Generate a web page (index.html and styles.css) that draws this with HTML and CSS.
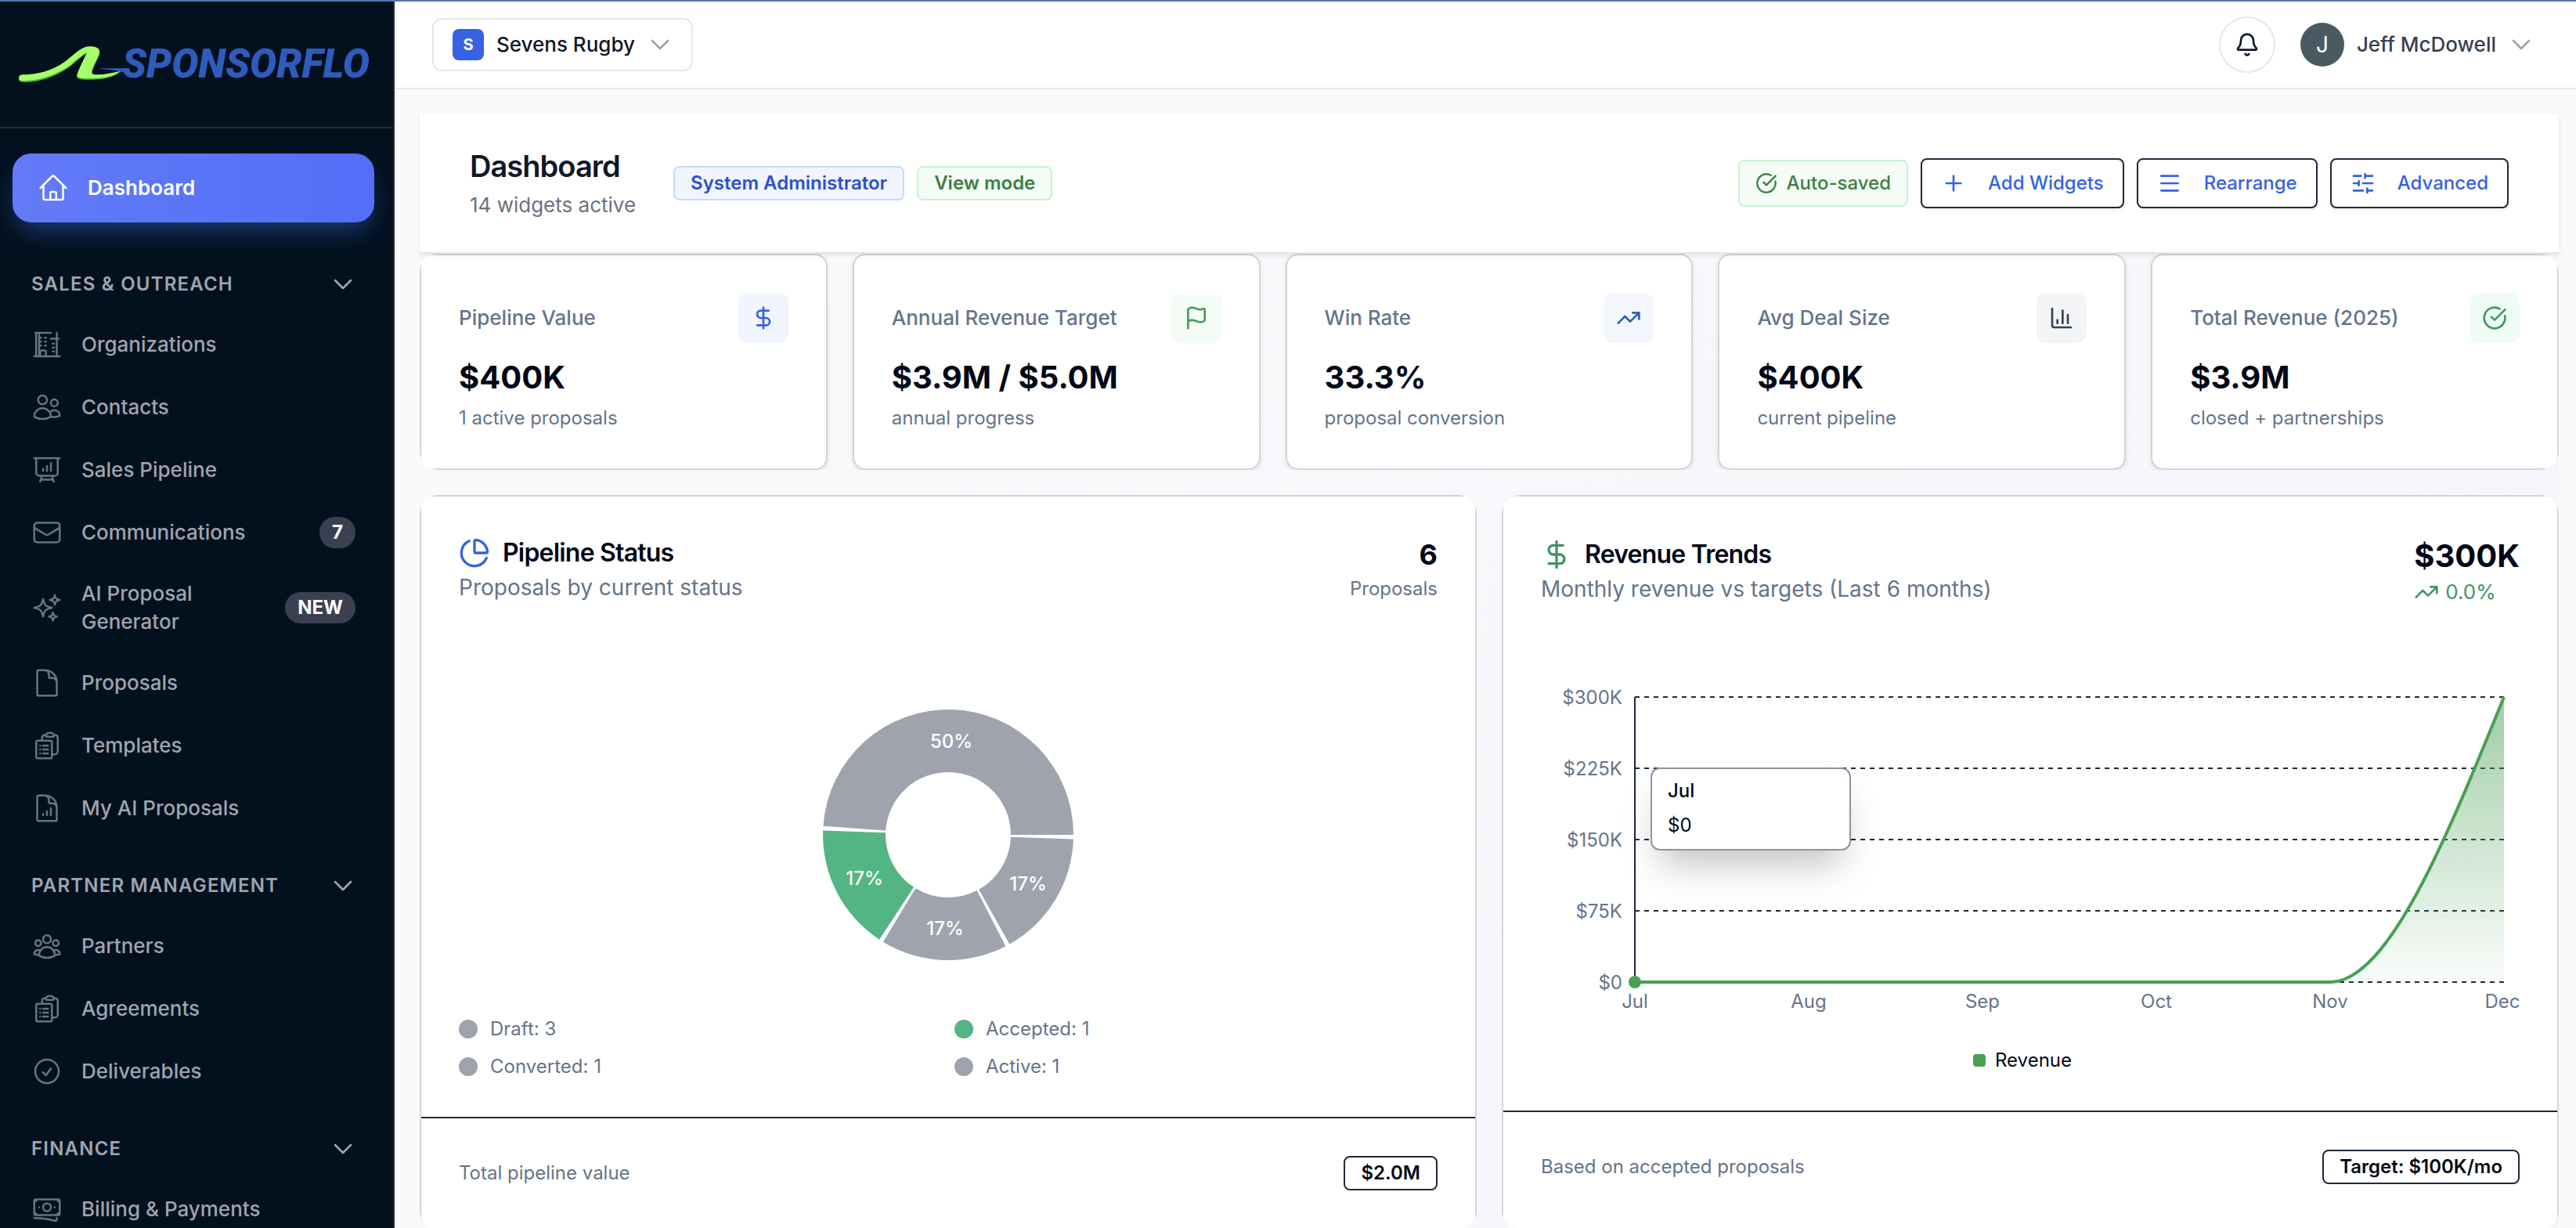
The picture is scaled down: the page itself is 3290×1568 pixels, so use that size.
FILE: index.html
```html
<!DOCTYPE html>
<html lang="en">
<head>
<meta charset="utf-8">
<meta name="viewport" content="width=device-width, initial-scale=1">
<title>Dashboard – SponsorFlo</title>
<link rel="stylesheet" href="styles.css">
</head>
<body>
<svg class="defs" aria-hidden="true">
  <symbol id="i-chevron" viewBox="0 0 24 24"><path d="m19.5 8.25-7.5 7.5-7.5-7.5"/></symbol>
  <symbol id="i-home" viewBox="0 0 24 24"><path d="m2.25 12 8.954-8.955c.44-.439 1.152-.439 1.591 0L21.75 12M4.5 9.75v10.125c0 .621.504 1.125 1.125 1.125H9.75v-4.875c0-.621.504-1.125 1.125-1.125h2.25c.621 0 1.125.504 1.125 1.125V21h4.125c.621 0 1.125-.504 1.125-1.125V9.75M8.25 21h8.25"/></symbol>
  <symbol id="i-building" viewBox="0 0 24 24"><path d="M2.25 21h19.5m-18-18v18m2.25-18v18m13.5-18v18M6.75 6.75h.75m-.75 3h.75m-.75 3h.75m3-6h.75m-.75 3h.75m-.75 3h.75M6.75 21v-3.375c0-.621.504-1.125 1.125-1.125h2.25c.621 0 1.125.504 1.125 1.125V21M3 3h12m4.5 4.5h-4.500M21 7.500h-1.500M16.500 11.250h.750m-.750 3h.750m-.750 3h.750"/></symbol>
  <symbol id="i-users" viewBox="0 0 24 24"><path d="M15 19.128a9.380 9.380 0 0 0 2.625.372 9.337 9.337 0 0 0 4.121-.952 4.125 4.125 0 0 0-7.533-2.493M15 19.128v-.003c0-1.113-.285-2.160-.786-3.070M15 19.128v.106A12.318 12.318 0 0 1 8.624 21c-2.331 0-4.512-.645-6.374-1.766l-.001-.109a6.375 6.375 0 0 1 11.964-3.070M12 6.375a3.375 3.375 0 1 1-6.750 0 3.375 3.375 0 0 1 6.750 0Zm8.250 2.250a2.625 2.625 0 1 1-5.250 0 2.625 2.625 0 0 1 5.250 0Z"/></symbol>
  <symbol id="i-presentation" viewBox="0 0 24 24"><path d="M3.750 3v11.250A2.250 2.250 0 0 0 6 16.500h2.250M3.750 3h-1.500m1.500 0h16.500m0 0h1.500m-1.500 0v11.250A2.250 2.250 0 0 1 18 16.500h-2.250m-7.500 0h7.500m-7.500 0-1 3m8.500-3 1 3m0 0 .500 1.500m-.500-1.500h-9.500m0 0-.500 1.500M9 11.250v1.500M12 9v3.750m3-6v6"/></symbol>
  <symbol id="i-mail" viewBox="0 0 24 24"><path d="M21.750 6.750v10.500a2.250 2.250 0 0 1-2.250 2.250h-15a2.250 2.250 0 0 1-2.250-2.250V6.750m19.500 0A2.250 2.250 0 0 0 19.500 4.500h-15a2.250 2.250 0 0 0-2.250 2.250m19.500 0v.243a2.250 2.250 0 0 1-1.070 1.916l-7.500 4.615a2.250 2.250 0 0 1-2.360 0L3.320 8.910a2.250 2.250 0 0 1-1.070-1.916V6.750"/></symbol>
  <symbol id="i-sparkles" viewBox="0 0 24 24"><path d="M9.813 15.904 9 18.750l-.813-2.846a4.500 4.500 0 0 0-3.090-3.090L2.250 12l2.846-.813a4.500 4.500 0 0 0 3.090-3.090L9 5.250l.813 2.846a4.500 4.500 0 0 0 3.090 3.090L15.750 12l-2.846.813a4.500 4.500 0 0 0-3.090 3.090ZM18.259 8.715 18 9.750l-.259-1.035a3.375 3.375 0 0 0-2.455-2.456L14.250 6l1.036-.259a3.375 3.375 0 0 0 2.455-2.456L18 2.250l.259 1.035a3.375 3.375 0 0 0 2.456 2.456L21.750 6l-1.035.259a3.375 3.375 0 0 0-2.456 2.456ZM16.894 20.567 16.500 21.750l-.394-1.183a2.250 2.250 0 0 0-1.423-1.423L13.500 18.750l1.183-.394a2.250 2.250 0 0 0 1.423-1.423l.394-1.183.394 1.183a2.250 2.250 0 0 0 1.423 1.423l1.183.394-1.183.394a2.250 2.250 0 0 0-1.423 1.423Z"/></symbol>
  <symbol id="i-document" viewBox="0 0 24 24"><path d="M19.500 14.250v-2.625a3.375 3.375 0 0 0-3.375-3.375h-1.500A1.125 1.125 0 0 1 13.500 7.125v-1.500a3.375 3.375 0 0 0-3.375-3.375H8.250m2.250 0H5.625c-.621 0-1.125.504-1.125 1.125v17.250c0 .621.504 1.125 1.125 1.125h12.750c.621 0 1.125-.504 1.125-1.125V11.250a9 9 0 0 0-9-9Z"/></symbol>
  <symbol id="i-doc-chart" viewBox="0 0 24 24"><path d="M19.500 14.250v-2.625a3.375 3.375 0 0 0-3.375-3.375h-1.500A1.125 1.125 0 0 1 13.500 7.125v-1.500a3.375 3.375 0 0 0-3.375-3.375H8.250M9 16.500v.750m3-3v3M15 12v5.250m-4.500-15H5.625c-.621 0-1.125.504-1.125 1.125v17.250c0 .621.504 1.125 1.125 1.125h12.750c.621 0 1.125-.504 1.125-1.125V11.250a9 9 0 0 0-9-9Z"/></symbol>
  <symbol id="i-clipboard" viewBox="0 0 24 24"><path d="M9 12h3.750M9 15h3.750M9 18h3.750m3 .750H18a2.250 2.250 0 0 0 2.250-2.250V6.108c0-1.135-.845-2.098-1.976-2.192a48.424 48.424 0 0 0-1.123-.080m-5.801 0c-.065.210-.100.433-.100.664 0 .414.336.750.750.750h4.500a.750.750 0 0 0 .750-.750 2.250 2.250 0 0 0-.100-.664m-5.800 0A2.251 2.251 0 0 1 13.500 2.250H15c1.012 0 1.867.668 2.150 1.586m-5.800 0c-.376.023-.750.050-1.124.080C9.095 4.010 8.250 4.973 8.250 6.108V8.250m0 0H4.875c-.621 0-1.125.504-1.125 1.125v11.250c0 .621.504 1.125 1.125 1.125h9.750c.621 0 1.125-.504 1.125-1.125V9.375c0-.621-.504-1.125-1.125-1.125H8.250ZM6.750 12h.008v.008H6.750V12Zm0 3h.008v.008H6.750V15Zm0 3h.008v.008H6.750V18Z"/></symbol>
  <symbol id="i-group" viewBox="0 0 24 24"><path d="M18 18.720a9.094 9.094 0 0 0 3.741-.479 3 3 0 0 0-4.682-2.720m.940 3.198.001.031c0 .225-.012.447-.037.666A11.944 11.944 0 0 1 12 21c-2.170 0-4.207-.576-5.963-1.584A6.062 6.062 0 0 1 6 18.719m12 0a5.971 5.971 0 0 0-.941-3.197m0 0A5.995 5.995 0 0 0 12 12.750a5.995 5.995 0 0 0-5.058 2.772m0 0a3 3 0 0 0-4.681 2.720 8.986 8.986 0 0 0 3.740.477m.940-3.197a5.971 5.971 0 0 0-.940 3.197M15 6.750a3 3 0 1 1-6 0 3 3 0 0 1 6 0Zm6 3a2.250 2.250 0 1 1-4.500 0 2.250 2.250 0 0 1 4.500 0Zm-13.500 0a2.250 2.250 0 1 1-4.500 0 2.250 2.250 0 0 1 4.500 0Z"/></symbol>
  <symbol id="i-check" viewBox="0 0 24 24"><path d="M9 12.750 11.250 15 15 9.750M21 12a9 9 0 1 1-18 0 9 9 0 0 1 18 0Z"/></symbol>
  <symbol id="i-cash" viewBox="0 0 24 24"><path d="M2.250 18.750a60.070 60.070 0 0 1 15.797 2.101c.727.198 1.453-.342 1.453-1.096V18.750M3.750 4.500v.750A.750.750 0 0 1 3 6h-.750m0 0v-.375c0-.621.504-1.125 1.125-1.125H20.250M2.250 6v9m18-10.500v.750c0 .414.336.750.750.750h.750m-1.500-1.500h.375c.621 0 1.125.504 1.125 1.125v9.750c0 .621-.504 1.125-1.125 1.125h-.375m1.500-1.500H21a.750.750 0 0 0-.750.750v.750m0 0H3.750m0 0h-.375a1.125 1.125 0 0 1-1.125-1.125V15m1.500 1.500v-.750A.750.750 0 0 0 3 15h-.750M15 10.500a3 3 0 1 1-6 0 3 3 0 0 1 6 0Zm3 0h.008v.008H18V10.500Zm-12 0h.008v.008H6V10.500Z"/></symbol>
  <symbol id="i-bell" viewBox="0 0 24 24"><path d="M10.268 21a2 2 0 0 0 3.464 0M3.262 15.326A1 1 0 0 0 4 17h16a1 1 0 0 0 .740-1.673C19.410 13.956 18 12.499 18 8A6 6 0 0 0 6 8c0 4.499-1.411 5.956-2.738 7.326"/></symbol>
  <symbol id="i-done" viewBox="0 0 24 24"><path d="M21.801 10A10 10 0 1 1 17 3.335M9 11l3 3L22 4"/></symbol>
  <symbol id="i-plus" viewBox="0 0 24 24"><path d="M5 12h14M12 5v14"/></symbol>
  <symbol id="i-menu" viewBox="0 0 24 24"><path d="M4 5h16M4 12h16M4 19h16"/></symbol>
  <symbol id="i-sliders" viewBox="0 0 24 24"><path d="M10 5H3M12 19H3M14 3v4M16 17v4M21 12h-9M21 19h-5M21 5h-7M8 10v4M8 12H3"/></symbol>
  <symbol id="i-dollar" viewBox="0 0 24 24"><path d="M12 2v20M17 5H9.500a3.500 3.500 0 0 0 0 7h5a3.500 3.500 0 0 1 0 7H6"/></symbol>
  <symbol id="i-flag" viewBox="0 0 24 24"><path d="M4 22V4a1 1 0 0 1 .400-.800A6 6 0 0 1 8 2c3 0 5 2 7.333 2q2 0 3.067-.800A1 1 0 0 1 20 4v10a1 1 0 0 1-.400.800A6 6 0 0 1 16 16c-3 0-5-2-8-2a6 6 0 0 0-4 1.528"/></symbol>
  <symbol id="i-trend" viewBox="0 0 24 24"><path d="M16 7h6v6M22 7l-8.500 8.500-5-5L2 17"/></symbol>
  <symbol id="i-bars" viewBox="0 0 24 24"><path d="M3 3v16a2 2 0 0 0 2 2h16M18 17V9M13 17V5M8 17v-3"/></symbol>
  <symbol id="i-pie" viewBox="0 0 24 24"><path d="M21 12c.552 0 1.005-.449.950-.998a10 10 0 0 0-8.953-8.951c-.550-.055-.998.398-.998.950v8a1 1 0 0 0 1 1zM21.210 15.890A10 10 0 1 1 8 2.830"/></symbol>
</svg>

<div class="app">
  <aside class="sidebar">
    <a class="brand" href="#" aria-label="SponsorFlo home">
      <svg class="brand-logo" viewBox="0 0 460 48" role="img" aria-label="SponsorFlo">
        <svg x="0" y="0" width="146" height="48" viewBox="72 174 438 144">
          <path fill="#4fb83a" d="M72 303C72 294 78 290 88 290C150 290 196 272 234 250C268 228 296 196 322 186C336 180 362 181 372 187C382 193 385 204 380 214C370 236 356 262 353 276C351 286 356 290 372 290C404 290 434 282 462 276C434 296 400 304 352 305C310 306 292 302 294 290C297 274 322 230 333 204C304 220 276 252 250 268C204 296 150 314 100 315C80 315 72 312 72 303Z"/>
          <path fill="#a4ff68" d="M72 299C72 290 78 286 88 286C150 286 196 268 234 246C268 224 296 192 322 182C336 176 362 177 372 183C382 189 383 200 378 210C368 232 354 258 351 272C349 282 356 286 372 286C404 286 434 278 462 272C434 292 400 299 352 300C310 301 294 298 296 286C299 270 322 226 333 200C304 216 276 246 250 262C204 290 150 307 100 309C80 309 72 308 72 299Z"/>
          <path fill="#2f5bbd" d="M378 262H490V276H468C440 268 410 268 378 262Z"/>
        </svg>
        <text class="brand-name" x="132" y="41">SPONSORFLO</text>
      </svg>
    </a>
    <nav class="nav" aria-label="Main">
      <a class="nav-item nav-item--active" href="#" aria-current="page"><svg class="icon"><use href="#i-home"/></svg><span class="nav-text">Dashboard</span></a>

      <section class="nav-group">
        <button class="nav-heading" type="button" aria-expanded="true"><span>SALES &amp; OUTREACH</span><svg class="icon"><use href="#i-chevron"/></svg></button>
        <a class="nav-item" href="#"><svg class="icon"><use href="#i-building"/></svg><span class="nav-text">Organizations</span></a>
        <a class="nav-item" href="#"><svg class="icon"><use href="#i-users"/></svg><span class="nav-text">Contacts</span></a>
        <a class="nav-item" href="#"><svg class="icon"><use href="#i-presentation"/></svg><span class="nav-text">Sales Pipeline</span></a>
        <a class="nav-item" href="#"><svg class="icon"><use href="#i-mail"/></svg><span class="nav-text">Communications</span><span class="pill">7</span></a>
        <a class="nav-item" href="#"><svg class="icon"><use href="#i-sparkles"/></svg><span class="nav-text">AI Proposal Generator</span><span class="pill">NEW</span></a>
        <a class="nav-item" href="#"><svg class="icon"><use href="#i-document"/></svg><span class="nav-text">Proposals</span></a>
        <a class="nav-item" href="#"><svg class="icon"><use href="#i-clipboard"/></svg><span class="nav-text">Templates</span></a>
        <a class="nav-item" href="#"><svg class="icon"><use href="#i-doc-chart"/></svg><span class="nav-text">My AI Proposals</span></a>
      </section>

      <section class="nav-group">
        <button class="nav-heading" type="button" aria-expanded="true"><span>PARTNER MANAGEMENT</span><svg class="icon"><use href="#i-chevron"/></svg></button>
        <a class="nav-item" href="#"><svg class="icon"><use href="#i-group"/></svg><span class="nav-text">Partners</span></a>
        <a class="nav-item" href="#"><svg class="icon"><use href="#i-clipboard"/></svg><span class="nav-text">Agreements</span></a>
        <a class="nav-item" href="#"><svg class="icon"><use href="#i-check"/></svg><span class="nav-text">Deliverables</span></a>
      </section>

      <section class="nav-group">
        <button class="nav-heading" type="button" aria-expanded="true"><span>FINANCE</span><svg class="icon"><use href="#i-chevron"/></svg></button>
        <a class="nav-item" href="#"><svg class="icon"><use href="#i-cash"/></svg><span class="nav-text">Billing &amp; Payments</span></a>
      </section>
    </nav>
  </aside>

  <div class="main">
    <header class="topbar">
      <button class="org-switch" type="button"><span class="org-badge">S</span><span>Sevens Rugby</span><svg class="icon chevron"><use href="#i-chevron"/></svg></button>
      <div class="account">
        <button class="bell" type="button" aria-label="Notifications"><svg class="icon"><use href="#i-bell"/></svg></button>
        <button class="user" type="button"><span class="avatar">J</span><span>Jeff McDowell</span><svg class="icon chevron"><use href="#i-chevron"/></svg></button>
      </div>
    </header>

    <main class="content">
      <div class="page-head">
        <div class="page-title">
          <h1>Dashboard</h1>
          <p>14 widgets active</p>
        </div>
        <div class="tags">
          <span class="tag tag--blue">System Administrator</span>
          <span class="tag tag--green">View mode</span>
        </div>
        <div class="actions">
          <span class="saved"><svg class="icon"><use href="#i-done"/></svg>Auto-saved</span>
          <button class="btn" type="button"><svg class="icon"><use href="#i-plus"/></svg>Add Widgets</button>
          <button class="btn" type="button"><svg class="icon"><use href="#i-menu"/></svg>Rearrange</button>
          <button class="btn" type="button"><svg class="icon"><use href="#i-sliders"/></svg>Advanced</button>
        </div>
      </div>

      <div class="board">
        <div class="kpis">
          <article class="kpi"><div class="kpi-top"><h2>Pipeline Value</h2><span class="kpi-icon kpi-icon--blue"><svg class="icon"><use href="#i-dollar"/></svg></span></div><p class="kpi-value">$400K</p><p class="kpi-note">1 active proposals</p></article>
          <article class="kpi"><div class="kpi-top"><h2>Annual Revenue Target</h2><span class="kpi-icon kpi-icon--green"><svg class="icon"><use href="#i-flag"/></svg></span></div><p class="kpi-value">$3.9M / $5.0M</p><p class="kpi-note">annual progress</p></article>
          <article class="kpi"><div class="kpi-top"><h2>Win Rate</h2><span class="kpi-icon kpi-icon--sky"><svg class="icon"><use href="#i-trend"/></svg></span></div><p class="kpi-value">33.3%</p><p class="kpi-note">proposal conversion</p></article>
          <article class="kpi"><div class="kpi-top"><h2>Avg Deal Size</h2><span class="kpi-icon kpi-icon--gray"><svg class="icon"><use href="#i-bars"/></svg></span></div><p class="kpi-value">$400K</p><p class="kpi-note">current pipeline</p></article>
          <article class="kpi"><div class="kpi-top"><h2>Total Revenue (2025)</h2><span class="kpi-icon kpi-icon--mint"><svg class="icon"><use href="#i-done"/></svg></span></div><p class="kpi-value">$3.9M</p><p class="kpi-note">closed + partnerships</p></article>
        </div>

        <div class="panels">
          <div class="panel-clip">
          <article class="panel">
            <header class="panel-head">
              <div>
                <h2><svg class="icon icon--blue"><use href="#i-pie"/></svg>Pipeline Status</h2>
                <p class="panel-sub">Proposals by current status</p>
              </div>
              <div class="stat stat--count"><strong>6</strong><span>Proposals</span></div>
            </header>
            <div class="pie">
              <svg viewBox="-160 -160 320 320" role="img" aria-label="Proposals by status">
                <path class="slice" d="M160 0A160 160 0 0 0 -159.610 -11.160L-79.810 -5.580A80 80 0 0 1 80 0Z"/>
                <path class="slice slice--accepted" d="M-159.900 -5.580A160 160 0 0 0 -87.910 133.690L-43.960 66.840A80 80 0 0 1 -79.950 -2.790Z"/>
                <path class="slice" d="M-83.160 136.690A160 160 0 0 0 73.380 142.180L36.690 71.090A80 80 0 0 1 -41.580 68.340Z"/>
                <path class="slice" d="M78.300 139.530A160 160 0 0 0 159.900 5.580L79.950 2.790A80 80 0 0 1 39.150 69.770Z"/>
                <text x="4" y="-111">50%</text>
                <text x="-107" y="64">17%</text>
                <text x="-4" y="128">17%</text>
                <text x="102" y="71">17%</text>
              </svg>
            </div>
            <ul class="legend">
              <li>Draft: 3</li>
              <li class="accepted">Accepted: 1</li>
              <li>Converted: 1</li>
              <li>Active: 1</li>
            </ul>
            <footer class="panel-foot"><span>Total pipeline value</span><strong class="chip">$2.0M</strong></footer>
          </article>
          </div>

          <div class="panel-clip">
          <article class="panel">
            <header class="panel-head">
              <div>
                <h2><svg class="icon icon--green"><use href="#i-dollar"/></svg>Revenue Trends</h2>
                <p class="panel-sub">Monthly revenue vs targets (Last 6 months)</p>
              </div>
              <div class="stat stat--money"><strong>$300K</strong><span class="change"><svg class="icon"><use href="#i-trend"/></svg>0.0%</span></div>
            </header>
            <div class="trend">
              <svg viewBox="0 0 1250 500" role="img" aria-label="Monthly revenue">
                <defs><linearGradient id="fill" x1="0" y1="0" x2="0" y2="1"><stop offset="5%" stop-color="#4a9f54" stop-opacity=".5"/><stop offset="95%" stop-color="#4a9f54" stop-opacity=".05"/></linearGradient></defs>
                <path class="grid" d="M120 68H1230M120 159H1230M120 250H1230M120 341H1230M120 432H1230"/>
                <path class="axis" d="M120 68V432"/>
                <path fill="url(#fill)" d="M1008 432C1082 432 1156 250 1230 68V432Z"/>
                <path class="line" d="M120 432H1008C1082 432 1156 250 1230 68"/>
                <circle class="dot" cx="120" cy="432" r="8"/>
                <g class="y-labels"><text x="104" y="77">$300K</text><text x="104" y="168">$225K</text><text x="104" y="259">$150K</text><text x="104" y="350">$75K</text><text x="104" y="441">$0</text></g>
                <g class="x-labels"><text x="120" y="465">Jul</text><text x="342" y="465">Aug</text><text x="564" y="465">Sep</text><text x="786" y="465">Oct</text><text x="1008" y="465">Nov</text><text x="1228" y="465">Dec</text></g>
              </svg>
              <div class="tooltip"><strong>Jul</strong><span>$0</span></div>
            </div>
            <p class="series"><span>Revenue</span></p>
            <footer class="panel-foot"><span>Based on accepted proposals</span><strong class="chip">Target: $100K/mo</strong></footer>
          </article>
          </div>
        </div>
      </div>
    </main>
  </div>
</div>
</body>
</html>
```
FILE: styles.css
```css
* { box-sizing: border-box; }

body {
  margin: 0;
  font-family: Inter, "Liberation Sans", sans-serif;
  font-size: 26px;
  line-height: 36px;
  color: #020817;
  background: #f9fafc;
}

h1, h2, p, ul { margin: 0; padding: 0; }
button { font: inherit; color: inherit; background: none; border: 0; padding: 0; cursor: pointer; }
a { color: inherit; text-decoration: none; }
.defs { display: none; }

.icon {
  flex: none;
  width: 32px;
  height: 32px;
  fill: none;
  stroke: currentColor;
  stroke-width: 2;
  stroke-linecap: round;
  stroke-linejoin: round;
}

.app {
  display: flex;
  height: 100vh;
  border-top: 2px solid #5579ac;
  overflow: hidden;
}

/* Sidebar */
.sidebar {
  flex: none;
  width: 504px;
  overflow: hidden;
  background: #03111f;
  border-right: 2px solid #202a36;
  color: #a0a4ae;
}

.brand {
  display: flex;
  align-items: center;
  height: 162px;
  padding: 0 16px 0 24px;
  border-bottom: 2px solid #202a36;
}
.brand-logo { width: 460px; height: 48px; overflow: visible; }
.brand-name { font: italic 900 51px Roboto, sans-serif; fill: #2f5bbd; }

.nav { display: flex; flex-direction: column; padding: 32px 24px 32px 16px; }
.nav-group { display: flex; flex-direction: column; gap: 8px; margin-top: 30px; }
.nav-item--active + .nav-group { margin-top: 46px; }

.nav-heading {
  display: flex;
  align-items: center;
  justify-content: space-between;
  height: 66px;
  padding: 0 24px;
  font-size: 24px;
  font-weight: 600;
  letter-spacing: 0.05em;
}
.nav-heading .icon { stroke-width: 2; }

.nav-item {
  display: flex;
  align-items: center;
  gap: 24px;
  min-height: 72px;
  padding: 16px 24px;
  font-weight: 500;
}
.nav-item .icon { width: 40px; height: 40px; stroke-width: 1.5; color: #6b7280; }
.nav-text { flex: 1; }

.nav-item--active {
  min-height: 88px;
  padding: 16px 32px;
  border-radius: 24px;
  background: linear-gradient(90deg, #637bf8, #536ef7);
  box-shadow: 0 16px 32px -8px rgba(60, 110, 230, 0.5);
  color: #fff;
  font-weight: 600;
}
.nav-item--active .icon { color: #fff; }

.pill {
  flex: none;
  padding: 0 16px;
  border-radius: 20px;
  background: #3b4050;
  color: #fff;
  font-size: 24px;
  font-weight: 700;
  line-height: 40px;
}

/* Top bar */
.main { flex: 1; min-width: 0; overflow: hidden; }

.topbar {
  display: flex;
  align-items: center;
  justify-content: space-between;
  height: 112px;
  padding: 0 48px;
  background: #fff;
  border-bottom: 2px solid #e5e7eb;
}
.org-switch {
  display: flex;
  align-items: center;
  gap: 16px;
  height: 68px;
  padding: 0 24px;
  border: 2px solid #e5e7eb;
  border-radius: 12px;
  color: #111827;
  font-weight: 500;
}
.org-badge {
  width: 40px;
  border-radius: 8px;
  background: #3662e3;
  color: #fff;
  font-size: 20px;
  font-weight: 700;
  line-height: 40px;
}
.chevron { color: #9ca3af; }
.account { display: flex; align-items: center; gap: 32px; padding-right: 6px; }
.bell {
  display: grid;
  place-items: center;
  width: 72px;
  height: 72px;
  border: 2px solid #e5e7eb;
  border-radius: 50%;
  color: #111827;
}
.user { display: flex; align-items: center; gap: 16px; color: #374151; font-weight: 500; }
.avatar {
  width: 56px;
  border-radius: 50%;
  background: #4a5a62;
  color: #fff;
  font-size: 28px;
  font-weight: 400;
  line-height: 56px;
}

/* Page head */
.content { padding: 32px 22px 32px 32px; }
.page-head {
  position: relative;
  display: flex;
  align-items: center;
  min-height: 178px;
  padding: 32px 64px;
  background: #fff;
  border-bottom: 2px solid #e2e4e8;
  box-shadow: 0 2px 6px rgba(0, 0, 0, 0.08);
}
.page-title { margin-right: 48px; padding-top: 4px; }
.page-title h1 { font-size: 38px; font-weight: 600; line-height: 52px; letter-spacing: -0.025em; color: #111827; }
.page-title p { color: #6b7280; line-height: 48px; }
.tags { display: flex; gap: 16px; }
.tag {
  padding: 0 20px;
  border: 2px solid;
  border-radius: 8px;
  font-size: 24px;
  font-weight: 600;
  line-height: 40px;
}
.tag--blue { color: #2b50cf; background: #f0f5fe; border-color: #c3dafc; }
.tag--green { color: #3d7f43; background: #f3fcf5; border-color: #c6f3d2; }

.actions { display: flex; align-items: center; gap: 16px; margin-left: auto; font-size: 24px; font-weight: 500; }
.saved {
  display: flex;
  align-items: center;
  gap: 12px;
  height: 60px;
  padding: 0 20px;
  border: 2px solid #c6f3d2;
  border-radius: 8px;
  background: #f3fcf5;
  color: #3d7f43;
}
.saved .icon { width: 28px; height: 28px; }
.btn {
  display: flex;
  align-items: center;
  gap: 28px;
  height: 64px;
  padding: 0 24px;
  border: 2px solid #1e293b;
  border-radius: 8px;
  background: #fff;
  box-shadow: 0 2px 4px rgba(0, 0, 0, 0.08);
  color: #3662e3;
}

/* Board */
.board { background: linear-gradient(135deg, #f9fafc, #f4f5f8); }

.kpis {
  display: grid;
  grid-template-columns: repeat(5, minmax(0, 1fr));
  gap: 32px;
  overflow: hidden;
  border-radius: 24px;
}
.kpi {
  padding: 48px;
  border: 2px solid #d1d5db;
  border-radius: 16px;
  background: #fff;
  box-shadow: 0 2px 6px rgba(0, 0, 0, 0.1);
}
.kpi-top { display: flex; align-items: center; justify-content: space-between; margin-bottom: 20px; }
.kpi h2 { font-size: 26px; font-weight: 500; color: #64748b; }
.kpi-icon { display: grid; place-items: center; width: 64px; height: 64px; border-radius: 12px; }
.kpi-icon--blue { color: #3662e3; background: #f0f5fe; }
.kpi-icon--green { color: #4a9f54; background: #f3fcf5; }
.kpi-icon--sky { color: #2f5bbd; background: #f3f7fd; }
.kpi-icon--gray { color: #374151; background: #f3f4f6; }
.kpi-icon--mint { color: #43936a; background: #effcf5; }
.kpi-value { margin-bottom: 12px; font-size: 40px; font-weight: 700; line-height: 48px; }
.kpi-note { font-size: 24px; line-height: 32px; color: #64748b; }

.panels {
  display: grid;
  grid-template-columns: repeat(2, minmax(0, 1fr));
  gap: 32px;
  padding-top: 32px;
}
.panel-clip { display: flex; overflow: hidden; border-radius: 24px; }
.panel {
  display: flex;
  flex: 1;
  min-width: 0;
  flex-direction: column;
  border: 2px solid #d1d5db;
  border-radius: 16px;
  background: #fff;
}
.panel-head { display: flex; align-items: center; justify-content: space-between; padding: 48px; }
.panel-head h2 {
  display: flex;
  align-items: center;
  gap: 16px;
  font-size: 32px;
  font-weight: 600;
  line-height: 48px;
  letter-spacing: -0.025em;
}
.panel-head h2 .icon { width: 40px; height: 40px; }
.icon--blue { color: #3662e3; }
.icon--green { color: #43936a; }
.panel-sub { font-size: 28px; line-height: 40px; color: #64748b; }
.stat { display: flex; flex-direction: column; }
.stat--count { text-align: right; }
.stat--count strong { font-size: 36px; font-weight: 700; line-height: 52px; }
.stat--count span { font-size: 24px; color: #64748b; }
.stat--money strong { font-size: 40px; font-weight: 700; line-height: 56px; }
.change { display: flex; align-items: center; gap: 8px; color: #43936a; }

.pie { display: flex; justify-content: center; padding: 88px 48px 72px; }
.pie svg { width: 320px; height: 320px; }
.slice { fill: #9fa3ae; }
.slice--accepted { fill: #54b584; }
.pie text { font-size: 24px; font-weight: 500; fill: #fff; text-anchor: middle; }

.legend {
  display: grid;
  grid-template-columns: 1fr 1fr;
  gap: 16px;
  padding: 0 48px 48px;
  list-style: none;
  font-size: 24px;
  line-height: 32px;
  color: #64748b;
}
.legend li { display: flex; align-items: center; gap: 16px; }
.legend li::before { content: ""; width: 24px; height: 24px; border-radius: 50%; background: #9fa3ae; }
.legend .accepted::before { background: #54b584; }

.trend { position: relative; padding: 0 48px; }
.trend svg { display: block; width: 100%; }
.grid { stroke: #1e293b; stroke-width: 2; stroke-dasharray: 6 6; }
.axis { stroke: #1e293b; stroke-width: 2; }
.line { fill: none; stroke: #4a9f54; stroke-width: 4; }
.dot { fill: #4a9f54; }
.trend text { font-size: 24px; fill: #64748b; }
.y-labels { text-anchor: end; }
.x-labels { text-anchor: middle; }
.tooltip {
  position: absolute;
  top: 158px;
  left: 188px;
  display: flex;
  flex-direction: column;
  gap: 12px;
  width: 256px;
  padding: 12px 20px 14px;
  border: 2px solid #8f95a0;
  border-radius: 12px;
  background: #fff;
  box-shadow: 0 28px 48px -12px rgba(0, 0, 0, 0.25);
  font-size: 24px;
  line-height: 32px;
}
.tooltip strong { font-weight: 500; }
.series {
  display: flex;
  justify-content: center;
  padding: 16px 68px 48px 48px;
  font-size: 24px;
  line-height: 32px;
}
.series span { display: flex; align-items: center; gap: 12px; }
.series span::before { content: ""; width: 16px; height: 16px; border-radius: 4px; background: #4a9f54; }

.panel-foot {
  display: flex;
  align-items: center;
  justify-content: space-between;
  padding: 48px;
  border-top: 2px solid #1e293b;
  font-size: 24px;
  color: #64748b;
}
.chip {
  padding: 0 20px;
  border: 2px solid #1e293b;
  border-radius: 8px;
  color: #020817;
  font-weight: 600;
  line-height: 40px;
}
```
